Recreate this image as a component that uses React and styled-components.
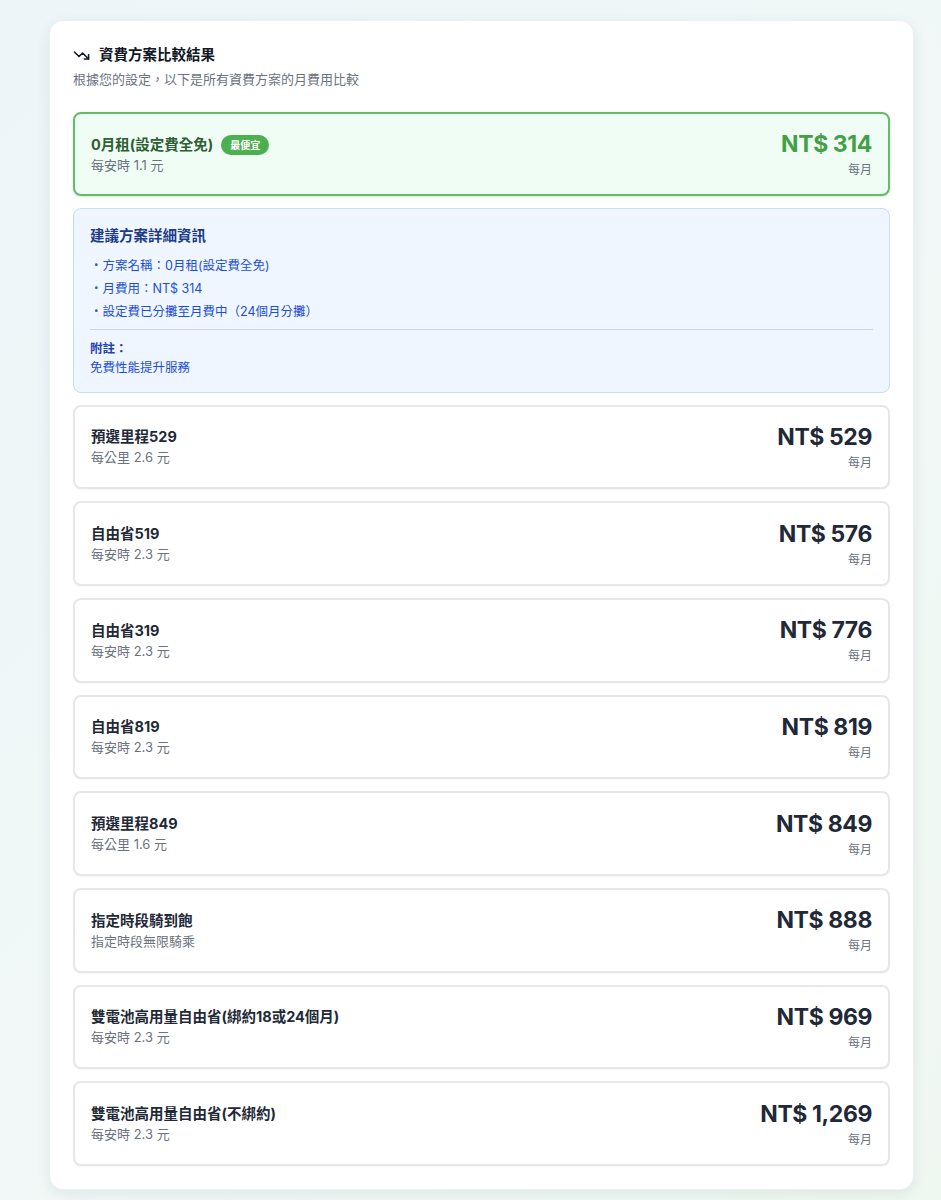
import styled, { createGlobalStyle } from 'styled-components';
import { TrendingDown } from 'lucide-react';

const GlobalStyle = createGlobalStyle`
  html, body {
    margin: 0;
    padding: 0;
  }
  body {
    font-family: Inter, "Noto Sans CJK TC", "Noto Sans", sans-serif;
    background: linear-gradient(135deg, #eef5f9 0%, #f1f8f6 60%, #eef8f1 100%);
    color: #1f2937;
  }
`;

const plans = [
    { name: '預選里程529', sub: '每公里 2.6 元', price: 'NT$ 529' },
    { name: '自由省519', sub: '每安時 2.3 元', price: 'NT$ 576' },
    { name: '自由省319', sub: '每安時 2.3 元', price: 'NT$ 776' },
    { name: '自由省819', sub: '每安時 2.3 元', price: 'NT$ 819' },
    { name: '預選里程849', sub: '每公里 1.6 元', price: 'NT$ 849' },
    { name: '指定時段騎到飽', sub: '指定時段無限騎乘', price: 'NT$ 888' },
    { name: '雙電池高用量自由省(綁約18或24個月)', sub: '每安時 2.3 元', price: 'NT$ 969' },
    { name: '雙電池高用量自由省(不綁約)', sub: '每安時 2.3 元', price: 'NT$ 1,269' },
];

const App = () => {
    return (
        <Page>
            <GlobalStyle />
            <Card>
                <Header>
                    <Title>
                        <TrendingDown size={17} strokeWidth={2.2} />
                        資費方案比較結果
                    </Title>
                    <Subtitle>根據您的設定，以下是所有資費方案的月費用比較</Subtitle>
                </Header>

                <List>
                    <PlanRow $best>
                        <PlanInfo>
                            <PlanName $best>
                                0月租(設定費全免)
                                <Badge>最便宜</Badge>
                            </PlanName>
                            <PlanSub>每安時 1.1 元</PlanSub>
                        </PlanInfo>
                        <PriceBox>
                            <Price $best>NT$ 314</Price>
                            <Unit>每月</Unit>
                        </PriceBox>
                    </PlanRow>

                    <Detail>
                        <DetailTitle>建議方案詳細資訊</DetailTitle>
                        <DetailList>
                            <DetailItem>方案名稱：0月租(設定費全免)</DetailItem>
                            <DetailItem>月費用：NT$ 314</DetailItem>
                            <DetailItem>設定費已分攤至月費中（24個月分攤）</DetailItem>
                        </DetailList>
                        <Divider />
                        <NoteLabel>附註：</NoteLabel>
                        <NoteText>免費性能提升服務</NoteText>
                    </Detail>

                    {plans.map((p) => (
                        <PlanRow key={p.name}>
                            <PlanInfo>
                                <PlanName>{p.name}</PlanName>
                                <PlanSub>{p.sub}</PlanSub>
                            </PlanInfo>
                            <PriceBox>
                                <Price>{p.price}</Price>
                                <Unit>每月</Unit>
                            </PriceBox>
                        </PlanRow>
                    ))}
                </List>
            </Card>
        </Page>
    );
};

const Page = styled.div`
    min-height: 100vh;
    box-sizing: border-box;
    padding: 20px 27px 40px 49px;
`;

const Card = styled.section`
    background: #fff;
    border-radius: 14px;
    border: 1px solid #eef0f2;
    box-shadow: 0 4px 14px rgba(15, 40, 60, 0.08);
    padding: 24px 23px 23px;
`;

const Header = styled.div`
    margin-bottom: 23px;
`;

const Title = styled.h2`
    display: flex;
    align-items: center;
    gap: 9px;
    margin: 0;
    font-size: 14.5px;
    line-height: 20px;
    font-weight: 700;
    color: #111827;
`;

const Subtitle = styled.p`
    margin: 5px 0 0;
    font-size: 13px;
    line-height: 19px;
    color: #6b7280;
`;

const List = styled.div`
    display: flex;
    flex-direction: column;
    gap: 12px;
`;

const PlanRow = styled.div`
    display: flex;
    align-items: center;
    justify-content: space-between;
    padding: ${(p) => (p.$best ? '16px 16px' : '16.35px 16px')};
    border-radius: 8px;
    border: 2px solid ${(p) => (p.$best ? '#66bb6a' : '#e5e7eb')};
    background: ${(p) => (p.$best ? '#f0fdf4' : '#fff')};
    box-shadow: ${(p) => (p.$best ? '0 1px 3px rgba(76,175,80,0.25)' : '0 1px 2px rgba(0,0,0,0.04)')};
`;

const PlanInfo = styled.div`
    display: flex;
    flex-direction: column;
    gap: 2px;
`;

const PlanName = styled.div`
    display: flex;
    align-items: center;
    gap: 8px;
    font-size: 14.5px;
    line-height: 20px;
    font-weight: 700;
    color: ${(p) => (p.$best ? '#2e5e34' : '#1f2937')};
`;

const Badge = styled.span`
    background: #4caf50;
    color: #fff;
    font-size: 10px;
    line-height: 14px;
    font-weight: 700;
    padding: 3px 9px;
    border-radius: 999px;
`;

const PlanSub = styled.div`
    font-size: 13px;
    line-height: 17px;
    color: #6b7280;
`;

const PriceBox = styled.div`
    display: flex;
    flex-direction: column;
    align-items: flex-end;
    gap: 4px;
`;

const Price = styled.div`
    font-size: 23px;
    line-height: 28px;
    font-weight: 700;
    letter-spacing: -0.4px;
    color: ${(p) => (p.$best ? '#43a047' : '#1f2937')};
`;

const Unit = styled.div`
    font-size: 12px;
    line-height: 16px;
    color: #6b7280;
`;

const Detail = styled.div`
    background: #eff6ff;
    border: 1px solid #c9dcf5;
    border-radius: 8px;
    padding: 17px 16px 14.5px;
    color: #1d4ed8;
`;

const DetailTitle = styled.h3`
    margin: 0 0 8px;
    font-size: 14.5px;
    line-height: 20px;
    font-weight: 700;
    color: #1e3a8a;
`;

const DetailList = styled.ul`
    list-style: none;
    margin: 0;
    padding: 0;
    font-size: 12.5px;
    line-height: 23px;
`;

const DetailItem = styled.li`
    &::before {
        content: '・';
        color: #3b5bb5;
    }
`;

const Divider = styled.hr`
    border: 0;
    border-top: 1px solid #c7d7ee;
    margin: 6px 0 9px;
`;

const NoteLabel = styled.div`
    font-size: 12.5px;
    line-height: 19px;
    font-weight: 700;
    color: #1e40af;
`;

const NoteText = styled.div`
    font-size: 12.5px;
    line-height: 19px;
    color: #1d4ed8;
`;

export default App;
